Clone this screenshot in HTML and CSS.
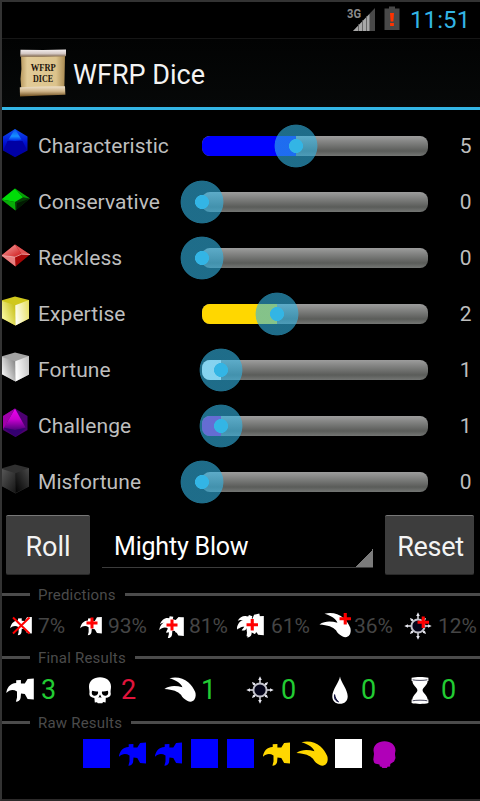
FILE: index.html
```html
<!DOCTYPE html>
<html lang="en">
  <head>
    <meta charset="UTF-8" />
    <meta name="viewport" content="width=device-width, initial-scale=1.0" />
    <title>WFRP Dice</title>
    <link rel="stylesheet" href="styles.css">
  </head>
  <body>
    <!-- Shared icons -->
    <svg class="defs" width="0" height="0">
      <defs>
        <linearGradient id="blueDie" x1="0" y1="0" x2="0" y2="1">
          <stop offset="0" stop-color="#1050f0" />
          <stop offset="0.5" stop-color="#0010d0" />
          <stop offset="1" stop-color="#000080" />
        </linearGradient>
        <linearGradient id="blueTip" x1="0" y1="0" x2="0" y2="1">
          <stop offset="0" stop-color="#0a50f0" />
          <stop offset="0.6" stop-color="#1590ff" />
          <stop offset="1" stop-color="#0020e8" />
        </linearGradient>
        <linearGradient id="purpleDie" x1="0" y1="0" x2="0" y2="1">
          <stop offset="0" stop-color="#f000f0" />
          <stop offset="0.5" stop-color="#c800d0" />
          <stop offset="1" stop-color="#50007c" />
        </linearGradient>
        <linearGradient id="redDie" x1="0" y1="0" x2="1" y2="1">
          <stop offset="0" stop-color="#f8b0b0" />
          <stop offset="1" stop-color="#d01818" />
        </linearGradient>
        <linearGradient id="yellowLeft" x1="0" y1="0.8" x2="1" y2="0.1">
          <stop offset="0" stop-color="#ffffb0" />
          <stop offset="1" stop-color="#c4bc10" />
        </linearGradient>
        <linearGradient id="yellowRight" x1="0" y1="0.6" x2="1" y2="0.3">
          <stop offset="0" stop-color="#fffff4" />
          <stop offset="1" stop-color="#e6e066" />
        </linearGradient>
        <linearGradient id="whiteLeft" x1="0" y1="0.8" x2="1" y2="0.1">
          <stop offset="0" stop-color="#ffffff" />
          <stop offset="1" stop-color="#808080" />
        </linearGradient>
        <linearGradient id="whiteRight" x1="0" y1="0.6" x2="1" y2="0.3">
          <stop offset="0" stop-color="#ffffff" />
          <stop offset="1" stop-color="#c4c4c4" />
        </linearGradient>
        <linearGradient id="blackLeft" x1="0" y1="0" x2="1" y2="1">
          <stop offset="0" stop-color="#585858" />
          <stop offset="1" stop-color="#161616" />
        </linearGradient>
        <linearGradient id="blackRight" x1="0" y1="1" x2="1" y2="0">
          <stop offset="0" stop-color="#000000" />
          <stop offset="1" stop-color="#484848" />
        </linearGradient>
        <linearGradient id="paper" x1="0" y1="0" x2="1" y2="0">
          <stop offset="0" stop-color="#b8995f" />
          <stop offset="0.15" stop-color="#e2cb98" />
          <stop offset="0.8" stop-color="#dcc38c" />
          <stop offset="1" stop-color="#a98a52" />
        </linearGradient>
        <linearGradient id="rollTop" x1="0" y1="0" x2="0" y2="1">
          <stop offset="0" stop-color="#f4eeee" />
          <stop offset="0.55" stop-color="#d4c8c4" />
          <stop offset="1" stop-color="#7c6248" />
        </linearGradient>
        <linearGradient id="rollBottom" x1="0" y1="0" x2="0" y2="1">
          <stop offset="0" stop-color="#efe2cc" />
          <stop offset="0.5" stop-color="#cfb488" />
          <stop offset="1" stop-color="#71501f" />
        </linearGradient>
      </defs>

      <symbol id="hammer" viewBox="0 0 28 28">
        <path d="M0.3 17C0.8 12 4 8 8 7.2L10.2 7V4.3L14.9 4V7.4L18.8 7.6L21.6 3L27.8 2.6V23.4L21.6 23L18.8 18L15 17.6L14.6 22C14.2 24.4 12.3 25.8 9.9 25.8L11 21.5V15.5C7 13 3.5 13.8 0.3 17Z" />
      </symbol>
      <symbol id="comet" viewBox="0 0 32 28">
        <path d="M5.5 2.2C13 0.2 19.4 2.4 24.2 6.2C27.6 9 29.4 12 31.2 16C32 18 31.9 21.4 30.4 23.6C28.8 26 26 26.2 23.2 24.8C20.4 23.4 18.4 21.6 17 18.8C14 15.2 9 13.6 0.4 12.9C6.2 9 12 9.4 18.4 11.2C17.2 7.4 12.2 4.2 5.5 2.2Z" />
      </symbol>
      <symbol id="skull" viewBox="0 0 28 28">
        <path fill-rule="evenodd" d="M14 1.3C20.5 1.3 25 5 25 10.6C25 13 24.5 14.4 24.6 16.5C25.4 19.5 23.6 21.6 19.8 21.8L19.6 26.4L17 26L16.4 27.3H11.8L11 26.2L8.8 26.4L8.4 21.9C4.6 21.6 2.8 19.6 3.5 16.5C3.6 14.5 3 13 3 10.6C3 5 7.5 1.3 14 1.3ZM6.2 14.8C5 17.6 6.4 20 9 19.8C11.4 19.4 12.6 17.6 12 15.4C10.6 15.8 8.6 15.4 6.2 14.8ZM21.8 14.8C19.4 15.4 17.4 15.8 16 15.4C15.4 17.6 16.6 19.4 19 19.8C21.6 20 23 17.6 21.8 14.8ZM14 18.4L12.4 21.8L13.8 21.2L15.6 21.8Z" />
      </symbol>
      <symbol id="skullSolid" viewBox="0 0 28 28">
        <path d="M14 1.3C20.5 1.3 25 5 25 10.6L24.4 14L25 18L23.6 21.4L19.8 24L19.6 26.6L17 26.8L16.4 28H11.8L11 26.8L9.4 26.4L8.9 24.4C5.6 24 4.4 23.6 3.5 22.6L2.8 19.5L3.5 14L3 10.6C3 5 7.5 1.3 14 1.3Z" />
      </symbol>
      <symbol id="chaos" viewBox="0 0 28 28">
        <g fill="#e8e8f0">
          <path d="M13.3 8V4H12.2L14 0.3L15.8 4H14.7V8ZM13.3 20V24H12.2L14 27.7L15.8 24H14.7V20ZM8 13.3H4V12.2L0.3 14L4 15.8V14.7H8ZM20 13.3H24V12.2L27.7 14L24 15.8V14.7H20Z" />
          <path d="M13.3 8V6H12.4L14 2.6L15.6 6H14.7V8ZM13.3 20V22H12.4L14 25.4L15.6 22H14.7V20ZM8 13.3H6V12.4L2.6 14L6 15.6V14.7H8ZM20 13.3H22V12.4L25.4 14L22 15.6V14.7H20Z" transform="rotate(45 14 14)" />
        </g>
        <circle cx="14" cy="14" r="6.6" fill="#05051a" stroke="#c4c4cc" stroke-width="2" />
      </symbol>
      <symbol id="drop" viewBox="0 0 28 28">
        <path d="M14 0.6C14.8 6 21.7 14 21.7 20.2C21.7 25 18.6 27.8 14 27.8C9.4 27.8 6.3 25 6.3 20.2C6.3 14 13.2 6 14 0.6Z" />
        <path d="M8.6 18.6C7.8 22.6 9.6 25.2 12.6 25.8C10.4 24 9.2 21.8 8.6 18.6Z" fill="#10103c" stroke="#10103c" />
      </symbol>
      <symbol id="hourglass" viewBox="0 0 28 28">
        <path d="M5.6 1.8C10 0.6 18 0.6 22.4 1.8V5H21.6C21.6 9.4 16.6 11.4 16.6 14.2C16.6 17 21.6 19 21.6 23.6H22.4V27C18 28.2 10 28.2 5.6 27V23.6H6.4C6.4 19 11.4 17 11.4 14.2C11.4 11.4 6.4 9.4 6.4 5H5.6Z" />
        <path d="M6.6 3.8C10 4.6 18 4.6 21.4 3.8M6.6 24.8C10 24 18 24 21.4 24.8" fill="none" stroke="#303048" stroke-width="0.9" />
      </symbol>
      <symbol id="plus" viewBox="0 0 12 12">
        <path d="M4.5 0.5H7.5V4.5H11.5V7.5H7.5V11.5H4.5V7.5H0.5V4.5H4.5Z" />
      </symbol>
    </svg>

    <div class="screen">
      <div class="status-bar">
        <svg class="signal" width="30" height="26" viewBox="0 0 30 26">
          <path d="M28 2V25H6Z" fill="#484848" />
          <path d="M22.5 8V25H6Z" fill="#a8a8a8" />
          <path d="M11.5 18V25M15.5 14V25M19.5 10V25" stroke="#555" stroke-width="0.8" />
          <text x="0" y="12.2" class="network" textLength="14" lengthAdjust="spacingAndGlyphs">3G</text>
        </svg>
        <svg class="battery" width="16" height="24" viewBox="0 0 16 24">
          <path d="M5 0.5H11V2.5H15.5V24H0.5V2.5H5Z" fill="#484848" />
          <path d="M6 7H10L9.4 15.5H6.6Z M6.1 17H9.9V20H6.1Z" fill="#ff3300" />
        </svg>
        <span class="clock">11:51</span>
      </div>

      <div class="action-bar">
        <svg width="48" height="48" viewBox="0 0 48 48">
          <path d="M2 6H46L45.3 42H2.5L1.5 30L2.4 20Z" fill="url(#paper)" />
          <path d="M1.5 0.7L24 1L47 0.6V7.2L24 7.7L1.2 7.8Z" fill="url(#rollTop)" />
          <path d="M0.8 38.2L24 37.5L46 37.2L46.4 45.8L24 46.6L1 47.4Z" fill="url(#rollBottom)" />
          <text x="24.3" y="22.3" class="scroll-text" textLength="25" lengthAdjust="spacingAndGlyphs">WFRP</text>
          <text x="24" y="33" class="scroll-text" textLength="20" lengthAdjust="spacingAndGlyphs">DICE</text>
        </svg>
        <h1>WFRP Dice</h1>
      </div>

      <div class="dice-list">
        <div class="dice-row">
          <svg class="die" width="30" height="30" viewBox="0 0 30 30">
            <path d="M14 1L26.5 8.5V22.5L14 29.2L2 22.5V8.5Z" fill="url(#blueDie)" />
            <path d="M14 1L20.5 11.5L14 13L7.5 11.5Z" fill="url(#blueTip)" />
            <path d="M2.5 22L6.5 13H21.5L26 22L14 29Z" fill="#0000a4" />
          </svg>
          <span class="label">Characteristic</span>
          <div class="slider blue" style="--value: 41.7%"><div class="fill"></div><div class="thumb"></div></div>
          <span class="value">5</span>
        </div>
        <div class="dice-row">
          <svg class="die" width="30" height="30" viewBox="0 0 30 30">
            <path d="M14 4.5L29 14.5L14.5 26.5L0.5 15.5Z" fill="#063c06" />
            <path d="M14 4.5L22 13.2L14 18L0.5 15.5Z" fill="#00dc08" />
            <path d="M0.5 15.5L14 18L14.5 26.5Z" fill="#08ac08" />
            <path d="M14 4.5L29 14.5L22 13.2Z" fill="#08a008" />
            <path d="M16 19L28 15L15.5 25.5Z" fill="#021a02" />
          </svg>
          <span class="label">Conservative</span>
          <div class="slider" style="--value: 0%"><div class="fill"></div><div class="thumb"></div></div>
          <span class="value">0</span>
        </div>
        <div class="dice-row">
          <svg class="die" width="30" height="30" viewBox="0 0 30 30">
            <path d="M14 4.5L29 14.5L14.5 26.5L0.5 15.5Z" fill="#a80808" />
            <path d="M14 4.5L20.5 14L14 16.5L0.5 15.5Z" fill="url(#redDie)" />
            <path d="M0.5 15.5L14 17L14.5 26.5Z" fill="#e88080" />
            <path d="M14 4.5L29 14.5L20.5 14Z" fill="#e05454" />
            <path d="M0.5 15.5L14 17L20.5 14.2L29 14.5" fill="none" stroke="#f4b4b4" stroke-width="0.8" />
          </svg>
          <span class="label">Reckless</span>
          <div class="slider" style="--value: 0%"><div class="fill"></div><div class="thumb"></div></div>
          <span class="value">0</span>
        </div>
        <div class="dice-row">
          <svg class="die" width="30" height="30" viewBox="0 0 30 30">
            <path d="M0.5 4.5L14 0.5L28 4V22.5L14.5 29.5L0.5 22Z" fill="#d0c81c" />
            <path d="M0.5 4.8L14.3 9.3L14.5 29.5L0.5 22Z" fill="url(#yellowLeft)" />
            <path d="M14.3 9.3L28 4V22.5L14.5 29.5Z" fill="url(#yellowRight)" />
          </svg>
          <span class="label">Expertise</span>
          <div class="slider gold" style="--value: 33.3%"><div class="fill"></div><div class="thumb"></div></div>
          <span class="value">2</span>
        </div>
        <div class="dice-row">
          <svg class="die" width="30" height="30" viewBox="0 0 30 30">
            <path d="M0.5 4.5L14 0.5L28 4V22.5L14.5 29.5L0.5 22Z" fill="#a4a4a4" />
            <path d="M0.5 4.8L14.3 9.3L14.5 29.5L0.5 22Z" fill="url(#whiteLeft)" />
            <path d="M14.3 9.3L28 4V22.5L14.5 29.5Z" fill="url(#whiteRight)" />
          </svg>
          <span class="label">Fortune</span>
          <div class="slider white" style="--value: 8.2%"><div class="fill"></div><div class="thumb"></div></div>
          <span class="value">1</span>
        </div>
        <div class="dice-row">
          <svg class="die" width="30" height="30" viewBox="0 0 30 30">
            <path d="M14 0.5L26.5 8V22L14.5 29L2 22V8Z" fill="#4c0070" />
            <path d="M14 0.5L24.5 19.5L14 22L3 19.5Z" fill="url(#purpleDie)" />
            <path d="M14 0.5L2 8V21L3.5 19Z" fill="#a000aa" />
            <path d="M3 20L14 22L25 20L14.5 29Z" fill="#340070" />
          </svg>
          <span class="label">Challenge</span>
          <div class="slider purple" style="--value: 8.2%"><div class="fill"></div><div class="thumb"></div></div>
          <span class="value">1</span>
        </div>
        <div class="dice-row">
          <svg class="die" width="30" height="30" viewBox="0 0 30 30">
            <path d="M0.5 4.5L14 0.5L28 4V22.5L14.5 29.5L0.5 22Z" fill="#303030" />
            <path d="M0.5 4.8L14.3 9.3L14.5 29L0.5 22Z" fill="url(#blackLeft)" />
            <path d="M14.3 9.3L28 4V22.5L14.5 29Z" fill="url(#blackRight)" />
          </svg>
          <span class="label">Misfortune</span>
          <div class="slider" style="--value: 0%"><div class="fill"></div><div class="thumb"></div></div>
          <span class="value">0</span>
        </div>
      </div>

      <div class="controls">
        <button class="roll">Roll</button>
        <div class="spinner">Mighty Blow</div>
        <button class="reset">Reset</button>
      </div>

      <h2 class="predictions-title">Predictions</h2>
      <div class="predictions">
        <div class="item">
          <svg width="24" height="28" viewBox="0 0 24 28">
            <use href="#hammer" x="1" y="3" width="22" height="22" />
            <path d="M4 5.5L20.5 21.5M20.5 5.5L4 21.5" stroke="#f00" stroke-width="2" />
          </svg>
          <span>7%</span>
        </div>
        <div class="item">
          <svg width="24" height="28" viewBox="0 0 24 28">
            <use href="#hammer" x="1" y="3" width="22" height="22" />
            <use href="#plus" x="7" y="5" width="12" height="12" class="red" />
          </svg>
          <span>93%</span>
        </div>
        <div class="item">
          <svg width="26" height="28" viewBox="0 0 26 28">
            <use href="#hammer" x="2" y="1" width="22" height="22" transform="rotate(12 12 12)" />
            <use href="#hammer" x="1" y="3" width="25" height="25" />
            <use href="#plus" x="8" y="7" width="12" height="12" class="red" />
          </svg>
          <span>81%</span>
        </div>
        <div class="item">
          <svg width="30" height="28" viewBox="0 0 30 28">
            <use href="#hammer" x="1" y="0" width="22" height="22" transform="rotate(25 12 12)" />
            <use href="#hammer" x="0" y="1" width="25" height="25" transform="rotate(-8 12 12)" />
            <use href="#hammer" x="2" y="1.5" width="26" height="26" />
            <use href="#plus" x="10" y="6.5" width="12.5" height="12.5" class="red" />
          </svg>
          <span>61%</span>
        </div>
        <div class="item">
          <svg width="33" height="28" viewBox="0 0 33 28">
            <use href="#comet" x="0" y="-0.5" width="32" height="28" />
            <use href="#plus" x="20" y="0.5" width="12.5" height="12.5" class="red" />
          </svg>
          <span>36%</span>
        </div>
        <div class="item">
          <svg width="30" height="28" viewBox="0 0 30 28">
            <use href="#chaos" x="1" y="0" width="28" height="28" />
            <use href="#plus" x="14" y="4" width="12.5" height="12.5" class="red" />
          </svg>
          <span>12%</span>
        </div>
      </div>

      <h2 class="final-title">Final Results</h2>
      <div class="results">
        <div class="item"><svg width="28" height="28"><use href="#hammer" /></svg><span>3</span></div>
        <div class="item bad"><svg width="28" height="28"><use href="#skull" /></svg><span>2</span></div>
        <div class="item"><svg class="wide" width="32" height="28"><use href="#comet" /></svg><span>1</span></div>
        <div class="item"><svg width="28" height="28"><use href="#chaos" /></svg><span>0</span></div>
        <div class="item"><svg width="28" height="28"><use href="#drop" /></svg><span>0</span></div>
        <div class="item"><svg width="28" height="28"><use href="#hourglass" /></svg><span>0</span></div>
      </div>

      <h2 class="raw-title">Raw Results</h2>
      <div class="raw">
        <div class="face blue"></div>
        <svg class="blue" width="27" height="28" viewBox="0 0 27 28"><use href="#hammer" x="-0.5" width="28" height="28" /></svg>
        <svg class="blue" width="27" height="28" viewBox="0 0 27 28"><use href="#hammer" x="-0.5" width="28" height="28" /></svg>
        <div class="face blue"></div>
        <div class="face blue"></div>
        <svg class="gold" width="27" height="28" viewBox="0 0 27 28"><use href="#hammer" x="-0.5" width="28" height="28" /></svg>
        <svg class="gold raw-comet" width="32" height="28"><use href="#comet" /></svg>
        <div class="face white"></div>
        <svg class="purple" width="27" height="28" viewBox="0 0 27 28"><use href="#skullSolid" x="-0.5" width="28" height="28" /></svg>
      </div>
    </div>
  </body>
</html>
```
FILE: styles.css
```css
* {
  box-sizing: border-box;
}
body {
  margin: 0;
  background-color: #000;
  font-family: Roboto, "Liberation Sans", sans-serif;
  color: #bebebe;
}
h1, h2 {
  margin: 0;
  font-weight: 400;
}
.defs {
  display: block;
}
.screen {
  width: 480px;
  height: 801px;
  border-top: 2px solid #333;
  border-left: 2px solid #333;
  border-bottom: 2px solid #2c2a2a;
  overflow: hidden;
}
.blue {
  --color: #0000ff;
}
.gold {
  --color: #ffd700;
}
.white {
  --color: #ffffff;
}
.purple {
  --color: #b000b8;
}
.red {
  fill: #ff0000;
}

/* Top bars */
.status-bar {
  display: flex;
  height: 36px;
  padding: 4px 10px 0 0;
  justify-content: flex-end;
}
.signal {
  margin-right: 7px;
}
.network {
  font-size: 13px;
  font-weight: 700;
  fill: #8c8c8c;
}
.clock {
  width: 60px;
  margin-left: 10px;
  font-size: 24px;
  line-height: 29px;
  letter-spacing: 0.1px;
  color: #33b5e5;
}
.action-bar {
  display: flex;
  align-items: center;
  height: 72px;
  padding-left: 17px;
  border-top: 1px solid #161616;
  border-bottom: 3px solid #33b5e5;
  background: linear-gradient(#020303, #060808);
}
.action-bar h1 {
  margin: 4px 0 0 6px;
  font-size: 27px;
  line-height: 32px;
  color: #f3f3f3;
}
.scroll-text {
  font-family: "Liberation Serif", serif;
  font-size: 10px;
  font-weight: 700;
  text-anchor: middle;
  fill: #1c140a;
}

/* Dice sliders */
.dice-list {
  padding-top: 8px;
}
.dice-row {
  display: grid;
  grid-template-columns: 36px 164px 226px 43.6px;
  align-items: center;
  height: 56px;
  font-size: 21px;
}
.label {
  letter-spacing: 0.08px;
}
.die {
  margin: 0 0 6px -1px;
}
.slider {
  position: relative;
  height: 20px;
  border-radius: 8px;
  background: linear-gradient(#9d9d9d, #5a5c59 75%, #747674);
}
.fill {
  width: var(--value);
  height: 20px;
  border-radius: 8px 0 0 8px;
  background-color: var(--color);
}
.thumb {
  position: absolute;
  top: -12px;
  left: calc(var(--value) - 22px);
  width: 44px;
  height: 44px;
  background: radial-gradient(circle, #33b5e5 6.7px, rgba(51, 181, 229, 0.6) 7.3px, rgba(51, 181, 229, 0.6) 21px, transparent 21.8px);
}
.value {
  text-align: right;
}

/* Buttons */
.controls {
  display: flex;
  height: 65px;
  padding: 5px 6px 0 4px;
}
button {
  height: 60px;
  padding: 3px 0 0;
  border: none;
  border-top: 1px solid #787878;
  border-bottom: 1px solid #292929;
  border-radius: 2px;
  background-color: #3d3d3d;
  font-family: inherit;
  font-size: 27px;
  color: #f3f3f3;
}
.roll {
  width: 84px;
}
.reset {
  width: 89px;
  padding-left: 2px;
  letter-spacing: -0.3px;
}
.spinner {
  flex: 1;
  height: 53px;
  margin: 0 12px;
  padding-left: 12px;
  border-bottom: 1px solid #3c3c3c;
  background: linear-gradient(135deg, transparent 50%, #7b7b7b 50%) right bottom / 18px 18px no-repeat;
  font-size: 25px;
  line-height: 64px;
  letter-spacing: -0.2px;
  color: #fff;
}

/* Section titles with a rule on both sides */
h2 {
  display: flex;
  align-items: center;
  height: 19px;
  font-size: 15px;
  letter-spacing: 0.2px;
  color: #4b4b4b;
}
h2::before,
h2::after {
  content: "";
  height: 3px;
  background-color: #4b4b4b;
}
h2::before {
  width: 28px;
  margin-right: 8px;
}
h2::after {
  flex: 1;
  margin-left: 9px;
}
.predictions-title {
  margin-top: 10px;
}
.final-title {
  margin-top: 1px;
}
.item {
  display: flex;
  align-items: center;
}
.item svg {
  flex: none;
  fill: #fff;
}
.predictions {
  display: grid;
  grid-template-columns: 70px 79px 78px 83px 84px 78px;
  height: 43px;
  padding-left: 7px;
  font-size: 21px;
  color: #454545;
}
.predictions .item span {
  margin-left: 5px;
}
.predictions .item:nth-child(5) span {
  margin-left: 2px;
}
.results {
  display: grid;
  grid-template-columns: repeat(6, 80px);
  height: 46px;
  padding-left: 4px;
  font-size: 27px;
  color: #22cc33;
}
.results span {
  margin-left: 7px;
}
.results .wide {
  margin: 0 -2px;
}
.results .bad {
  color: #e0143c;
}
.raw {
  display: flex;
  justify-content: center;
  align-items: center;
  gap: 9px;
  height: 43px;
  padding-right: 1px;
}
.raw svg {
  fill: var(--color);
}
.raw-comet {
  margin: 0 -2px 0 -3px;
}
.face {
  width: 27px;
  height: 29px;
  background-color: var(--color);
}
```
